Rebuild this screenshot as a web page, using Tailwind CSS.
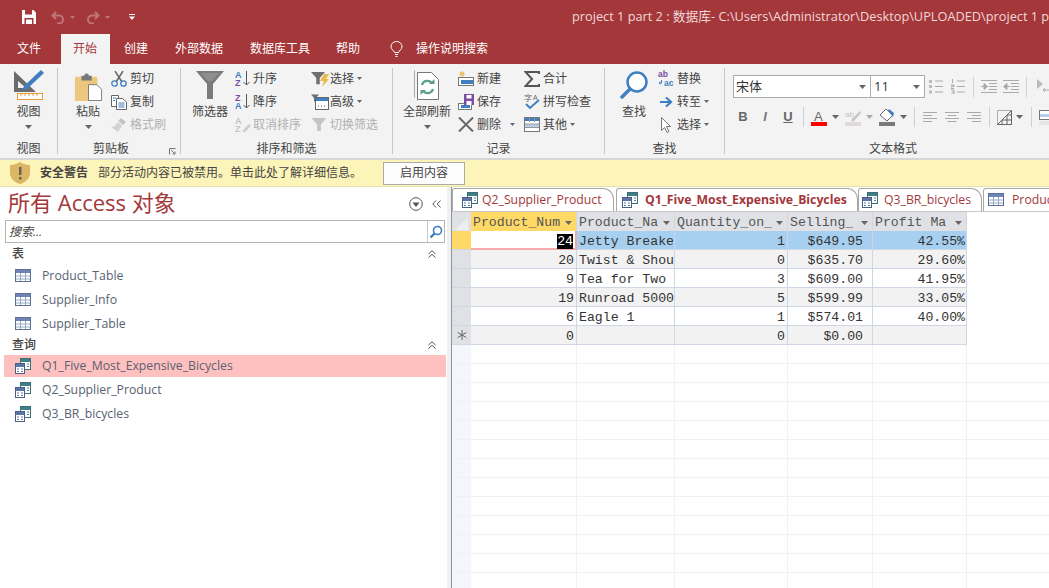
<!DOCTYPE html>
<html lang="zh">
<head>
<meta charset="UTF-8">
<title>project 1 part 2</title>
<script src="https://cdn.jsdelivr.net/npm/@tailwindcss/browser@4"></script>
</head>
<body class="w-[1049px] h-[588px] overflow-hidden bg-white text-[12px] text-[#444] font-['Open_Sans','Noto_Sans_CJK_SC',sans-serif]">

<!-- shared icons -->
<svg class="hidden">
  <defs>
    <symbol id="caret" viewBox="0 0 7 4"><path d="M0 0h7L3.5 4z" fill="#666"/></symbol>
    <symbol id="tbl" viewBox="0 0 16 16">
      <rect x=".5" y="1.5" width="15" height="12" fill="#fff" stroke="#5a6f9a"/>
      <rect x="1" y="2" width="14" height="3" fill="#6d86b5"/>
      <path d="M1 8h14M1 11h14M5.500 5v8M10.500 5v8" stroke="#98a9c8"/>
    </symbol>
    <symbol id="qry" viewBox="0 0 16 16">
      <rect x="5.500" y=".5" width="10" height="11" fill="#fff" stroke="#3d6f78"/>
      <rect x="6" y="1" width="9" height="3" fill="#3f7f86"/>
      <path d="M8 6h2M12 6h2M8 8.500h2M12 8.500h2" stroke="#4d7f88"/>
      <rect x=".5" y="5.500" width="9" height="10" fill="#fff" stroke="#4a5f86"/>
      <rect x="1" y="6" width="8" height="3" fill="#5b76a6"/>
      <path d="M2 11h2M6 11h2M2 13.500h2M6 13.500h2" stroke="#5b76a6"/>
    </symbol>
    <symbol id="funnel" viewBox="0 0 16 16"><path d="M0 1h16L10 8v7H6V8z" fill="currentColor"/></symbol>
    <symbol id="lines-left" viewBox="0 0 14 12"><path d="M0 1.500h14M0 4.500h9M0 7.500h14M0 10.500h9" stroke="#aaa"/></symbol>
    <symbol id="lines-center" viewBox="0 0 14 12"><path d="M0 1.500h14M2.500 4.500h9M0 7.500h14M2.500 10.500h9" stroke="#aaa"/></symbol>
    <symbol id="lines-right" viewBox="0 0 14 12"><path d="M0 1.500h14M5 4.500h9M0 7.500h14M5 10.500h9" stroke="#aaa"/></symbol>
  </defs>
</svg>

<!-- title bar -->
<div class="h-[34px] bg-[#a4373a] flex items-center">
  <svg class="shrink-0 w-[14px] h-[14px] ml-[22px]" viewBox="0 0 14 14"><path d="M0 0h11.500L14 2.500V14H0z" fill="#fff"/><rect x="3" y="0" width="7" height="4.500" fill="#a4373a"/><rect x="2.500" y="8" width="9" height="6" fill="#a4373a"/><rect x="4" y="9.500" width="6" height="4.500" fill="#fff"/></svg>
  <svg class="shrink-0 w-[14px] h-[13px] ml-[15px]" viewBox="0 0 14 13"><path d="M5 1L1.500 4.500 5 8M2 4.500h6a4 4 0 0 1 0 8H6" fill="none" stroke="#c07578" stroke-width="2"/></svg>
  <svg class="shrink-0 w-[5px] h-[3px] ml-[5px]" viewBox="0 0 7 4"><path d="M0 0h7L3.500 4z" fill="#c07578"/></svg>
  <svg class="shrink-0 w-[14px] h-[13px] ml-[11px]" viewBox="0 0 14 13"><path d="M9 1l3.500 3.500L9 8M12 4.500H6a4 4 0 0 0 0 8h2" fill="none" stroke="#c07578" stroke-width="2"/></svg>
  <svg class="shrink-0 w-[5px] h-[3px] ml-[5px]" viewBox="0 0 7 4"><path d="M0 0h7L3.500 4z" fill="#c07578"/></svg>
  <svg class="shrink-0 w-[6px] h-[6px] ml-[19px]" viewBox="0 0 6 6"><path d="M0 0h6v1H0zM0 2.500h6L3 6z" fill="#fff"/></svg>
  <div class="ml-[437px] w-[480px] shrink-0 overflow-hidden text-[12.75px] whitespace-nowrap text-[#f1d9d9]">project 1 part 2 : 数据库- C:\Users\Administrator\Desktop\UPLOADED\project 1 part 2</div>
</div>

<!-- ribbon tabs -->
<div class="h-[30px] bg-[#a4373a] flex text-white">
  <div class="ml-[4px] px-[13px] flex items-center">文件</div>
  <div class="ml-[7px] w-[49px] pl-[12px] flex items-center bg-[#f3f3f3] text-[#a4373a]">开始</div>
  <div class="ml-px px-[13px] flex items-center">创建</div>
  <div class="ml-px px-[13px] flex items-center">外部数据</div>
  <div class="ml-px px-[13px] flex items-center">数据库工具</div>
  <div class="px-[13px] flex items-center">帮助</div>
  <div class="ml-[17px] flex items-center">
    <svg class="w-[13px] h-[16px]" viewBox="0 0 13 16"><path d="M4.500 11.500C4 9.500 1 8.500 1 5.500a5.500 5 0 0 1 11 0c0 3-3 4-3.500 6zM5 13.500h3M5.500 15.500h2" fill="none" stroke="#fff"/></svg>
    <span class="ml-[13px]">操作说明搜索</span>
  </div>
</div>

<!-- ribbon -->
<div class="h-[96px] bg-[#f3f3f3] border-b-2 border-[#d6d6d6] flex overflow-hidden pt-[3px]">

  <!-- 视图 -->
  <div class="w-[57px] shrink-0 flex flex-col">
    <div class="h-[70px] shrink-0 flex flex-col items-center">
      <div class="h-[36px] flex items-end pb-[3px]">
        <svg class="w-[30px] h-[30px]" viewBox="0 0 30 30">
          <path d="M0 1l22 21H0zM4 11v7h8z" fill="#6b6b6b" fill-rule="evenodd"/>
          <path d="M27 0l3 3-17 16-5 2 2-5z" fill="#3f7fc1"/>
          <rect x="3.500" y="23.500" width="25" height="6" fill="#fff" stroke="#e39a3b"/>
          <path d="M7 24v2M11 24v2M15 24v2M19 24v2M23 24v2" stroke="#e39a3b"/>
        </svg>
      </div>
      <div class="leading-[16px] mt-px">视图</div>
      <svg class="w-[7px] h-[4px] mt-[5px]"><use href="#caret"/></svg>
    </div>
    <div class="text-center leading-[24px]">视图</div>
  </div>
  <div class="w-px h-[86px] mt-px shrink-0 bg-[#c6c6c6]"></div>

  <!-- 剪贴板 -->
  <div class="w-[122px] shrink-0 flex flex-col relative">
    <div class="h-[70px] shrink-0 flex">
      <div class="ml-[14px] w-[32px] flex flex-col items-center">
        <div class="h-[36px] flex items-end pb-[2px]">
          <svg class="w-[29px] h-[28px]" viewBox="0 0 29 30">
            <rect x="0" y="4" width="24" height="26" rx="1" fill="#edc77d"/>
            <path d="M7 3h3a2.500 2.500 0 0 1 5 0h3v5H7z" fill="#777"/>
            <path d="M14.500 12.500h9l5 5v12h-14z" fill="#fff" stroke="#777"/>
          </svg>
        </div>
        <div class="leading-[16px] mt-px">粘贴</div>
        <svg class="w-[7px] h-[4px] mt-[5px]"><use href="#caret"/></svg>
      </div>
      <div class="ml-[7px] flex flex-col">
        <div class="h-[23px] flex items-center">
          <svg class="w-[16px] h-[16px]" viewBox="0 0 16 16"><path d="M4 0l7 11M12 0L5 11" stroke="#666" stroke-width="1.500"/><circle cx="3.500" cy="12.500" r="2.700" fill="none" stroke="#3f7fc1" stroke-width="1.300"/><circle cx="12.500" cy="12.500" r="2.700" fill="none" stroke="#3f7fc1" stroke-width="1.300"/></svg>
          <span class="ml-[3px]">剪切</span>
        </div>
        <div class="h-[23px] flex items-center">
          <svg class="w-[16px] h-[16px]" viewBox="0 0 16 16"><path d="M.5 1.500h7v11h-7z" fill="#fff" stroke="#666"/><path d="M5.500 4.500h6l4 3.500v7.500h-10z" fill="#fff" stroke="#666"/><path d="M7.500 9h6M7.500 11h6M7.500 13h6M2 4h3M2 6.500h2" stroke="#3f7fc1"/></svg>
          <span class="ml-[3px]">复制</span>
        </div>
        <div class="h-[23px] flex items-center text-[#b1b1b1]">
          <svg class="w-[16px] h-[16px]" viewBox="0 0 16 16"><path d="M10 1l5 4-3 3-5-4z" fill="#c4c4c4"/><path d="M7 5l4 4-4 6-7-5c3 0 5-2 7-5z" fill="#d2d2d2"/></svg>
          <span class="ml-[3px]">格式刷</span>
        </div>
      </div>
    </div>
    <div class="leading-[24px] pr-[16px] text-center">剪贴板</div>
    <svg class="absolute left-[111px] top-[81px] w-[7px] h-[7px]" viewBox="0 0 7 7"><path d="M.5 6.500v-6h6M2 2l4 4M6 3.500V6H3.500" fill="none" stroke="#777"/></svg>
  </div>
  <div class="w-px h-[86px] mt-px shrink-0 bg-[#c6c6c6]"></div>

  <!-- 排序和筛选 -->
  <div class="w-[211px] shrink-0 flex flex-col">
    <div class="h-[70px] shrink-0 flex">
      <div class="ml-[11px] w-[36px] flex flex-col items-center">
        <div class="h-[36px] flex items-end pb-[4px]">
          <svg class="w-[28px] h-[28px]" viewBox="0 0 28 28"><path d="M0 0h28L17 13v15h-6V13z" fill="#7b7b7b"/><path d="M5 2h18l-7 8H12z" fill="#8f8f8f"/></svg>
        </div>
        <div class="leading-[16px] mt-px">筛选器</div>
      </div>
      <div class="ml-[7px] w-[76px] flex flex-col">
        <div class="h-[23px] flex items-center">
          <svg class="w-[16px] h-[17px]" viewBox="0 0 16 17"><text x="0" y="7.500" font-size="9" font-weight="700" fill="#3f7fc1" font-family="Liberation Sans">A</text><text x="0" y="16" font-size="9" font-weight="700" fill="#7a4ea3" font-family="Liberation Sans">Z</text><path d="M11.500 1v14M8.500 12l3 3 3-3" fill="none" stroke="#555"/></svg>
          <span class="ml-[2px]">升序</span>
        </div>
        <div class="h-[23px] flex items-center">
          <svg class="w-[16px] h-[17px]" viewBox="0 0 16 17"><text x="0" y="7.500" font-size="9" font-weight="700" fill="#7a4ea3" font-family="Liberation Sans">Z</text><text x="0" y="16" font-size="9" font-weight="700" fill="#3f7fc1" font-family="Liberation Sans">A</text><path d="M11.500 1v14M8.500 12l3 3 3-3" fill="none" stroke="#555"/></svg>
          <span class="ml-[2px]">降序</span>
        </div>
        <div class="h-[23px] flex items-center text-[#b1b1b1] whitespace-nowrap">
          <svg class="w-[16px] h-[17px]" viewBox="0 0 16 17"><text x="0" y="7.500" font-size="9" font-weight="700" fill="#c4c4c4" font-family="Liberation Sans">A</text><text x="0" y="16" font-size="9" font-weight="700" fill="#c4c4c4" font-family="Liberation Sans">Z</text><path d="M8 14l6-6 2 2-6 6H8z" fill="#cfcfcf"/></svg>
          <span class="ml-[2px]">取消排序</span>
        </div>
      </div>
      <div class="flex flex-col">
        <div class="h-[23px] flex items-center">
          <span class="relative w-[18px] h-[16px]">
            <svg class="w-[14px] h-[14px] text-[#6f6f6f]"><use href="#funnel"/></svg>
            <svg class="absolute left-[9px] top-[3px] w-[9px] h-[13px]" viewBox="0 0 9 13"><path d="M4 0h5L6 5h3L2 13l2-6H0z" fill="#e9b949"/></svg>
          </span>
          <span class="ml-px">选择</span>
          <svg class="w-[5px] h-[3px] ml-[3px]"><use href="#caret"/></svg>
        </div>
        <div class="h-[23px] flex items-center">
          <span class="relative w-[18px] h-[16px]">
            <svg class="absolute left-0 top-0 w-[8px] h-[8px] text-[#6f6f6f]"><use href="#funnel"/></svg>
            <svg class="absolute left-[4px] top-[3px] w-[14px] h-[13px]" viewBox="0 0 14 13"><rect x=".5" y=".5" width="13" height="12" fill="#fff" stroke="#666"/><rect x="1" y="1" width="12" height="3" fill="#3f7fc1"/><path d="M3 9h1M6 9h1M9 9h1" stroke="#555"/></svg>
          </span>
          <span class="ml-px">高级</span>
          <svg class="w-[5px] h-[3px] ml-[3px]"><use href="#caret"/></svg>
        </div>
        <div class="h-[23px] flex items-center text-[#b1b1b1] whitespace-nowrap">
          <svg class="w-[16px] h-[15px] text-[#c4c4c4] mr-[3px]"><use href="#funnel"/></svg>
          <span>切换筛选</span>
        </div>
      </div>
    </div>
    <div class="leading-[24px] text-center">排序和筛选</div>
  </div>
  <div class="w-px h-[86px] mt-px shrink-0 bg-[#c6c6c6]"></div>

  <!-- 记录 -->
  <div class="w-[211px] shrink-0 flex flex-col">
    <div class="h-[70px] shrink-0 flex">
      <div class="ml-[10px] w-[48px] flex flex-col items-center">
        <div class="h-[36px] flex items-end pb-[2px]">
          <svg class="w-[26px] h-[31px]" viewBox="0 0 26 31">
            <path d="M3.500 3.500v27M.5 .5v27" stroke="#aaa" fill="none"/>
            <path d="M3.500 2.500h14l7 7v20h-21z" fill="#fff" stroke="#777"/>
            <path d="M8 15a5.500 5.500 0 0 1 10-1.500M19 19a5.500 5.500 0 0 1-10 1.500" fill="none" stroke="#5aa08a" stroke-width="2.200"/>
            <path d="M15 14h5.500v-5zM12 20H6.500v5z" fill="#5aa08a"/>
          </svg>
        </div>
        <div class="leading-[16px] mt-px whitespace-nowrap">全部刷新</div>
        <svg class="w-[7px] h-[4px] mt-[5px]"><use href="#caret"/></svg>
      </div>
      <div class="ml-[7px] w-[66px] flex flex-col">
        <div class="h-[23px] flex items-center">
          <svg class="w-[16px] h-[16px]" viewBox="0 0 16 16"><path d="M4 0v6M1 3h6M2 1l4 4M6 1L2 5" stroke="#e9b949"/><rect x=".5" y="6.500" width="15" height="8" fill="#fff" stroke="#777"/><rect x="3" y="9" width="12" height="4" fill="#3f7fc1"/></svg>
          <span class="ml-[3px]">新建</span>
        </div>
        <div class="h-[23px] flex items-center">
          <svg class="w-[16px] h-[16px]" viewBox="0 0 16 16"><rect x=".5" y="9.500" width="13" height="6" fill="#fff" stroke="#777"/><rect x="3" y="11" width="9" height="3" fill="#3f7fc1"/><rect x="6" y="0" width="10" height="11" fill="#7a4ea3"/><rect x="8.500" y="1" width="5" height="3.500" fill="#fff"/><rect x="8.500" y="7" width="5" height="4" fill="#fff"/></svg>
          <span class="ml-[3px]">保存</span>
        </div>
        <div class="h-[23px] flex items-center">
          <svg class="w-[16px] h-[15px]" viewBox="0 0 16 15"><path d="M1 .5l14 14M15 .5L1 14.500" stroke="#666" stroke-width="2"/></svg>
          <span class="ml-[3px]">删除</span>
          <svg class="w-[5px] h-[3px] ml-[9px]"><use href="#caret"/></svg>
        </div>
      </div>
      <div class="flex flex-col">
        <div class="h-[23px] flex items-center">
          <svg class="w-[16px] h-[16px]" viewBox="0 0 16 16"><path d="M15 3V1H1.500L8 8l-6.500 7H15v-2" fill="none" stroke="#555" stroke-width="2"/></svg>
          <span class="ml-[3px]">合计</span>
        </div>
        <div class="h-[23px] flex items-center">
          <svg class="w-[16px] h-[17px]" viewBox="0 0 16 17"><text x="0" y="8" font-size="8" fill="#666" font-family="Noto Sans CJK SC">字</text><text x="9" y="7" font-size="7" fill="#666" font-family="Liberation Sans">A</text><path d="M2 11l4 4 9-8" fill="none" stroke="#3f7fc1" stroke-width="2"/></svg>
          <span class="ml-[3px]">拼写检查</span>
        </div>
        <div class="h-[23px] flex items-center">
          <svg class="w-[16px] h-[15px]" viewBox="0 0 16 15"><rect x=".5" y=".5" width="15" height="14" fill="#fff" stroke="#777"/><rect x="1" y="1" width="14" height="3" fill="#3f7fc1"/><rect x="1" y="7" width="14" height="3" fill="#b5cfe6"/><path d="M1 7h14M1 10.500h14M5.500 1v4M10.500 1v4" stroke="#999"/></svg>
          <span class="ml-[3px]">其他</span>
          <svg class="w-[5px] h-[3px] ml-[3px]"><use href="#caret"/></svg>
        </div>
      </div>
    </div>
    <div class="leading-[24px] text-center">记录</div>
  </div>
  <div class="w-px h-[86px] mt-px shrink-0 bg-[#c6c6c6]"></div>

  <!-- 查找 -->
  <div class="w-[119px] shrink-0 flex flex-col">
    <div class="h-[70px] shrink-0 flex">
      <div class="ml-[14px] w-[30px] flex flex-col items-center">
        <div class="h-[36px] flex items-end pb-[4px]">
          <svg class="w-[28px] h-[28px]" viewBox="0 0 28 28"><circle cx="17" cy="11" r="9.500" fill="#fff" stroke="#3f7fc1" stroke-width="2.500"/><path d="M10 18L2 26" stroke="#3f7fc1" stroke-width="3.500" stroke-linecap="round"/></svg>
        </div>
        <div class="leading-[16px] mt-px">查找</div>
      </div>
      <div class="ml-[9px] flex flex-col">
        <div class="h-[23px] flex items-center">
          <svg class="w-[17px] h-[17px]" viewBox="0 0 17 17"><text x="0" y="7" font-size="8.500" font-weight="700" fill="#7a4ea3" font-family="Liberation Sans">ab</text><text x="6" y="16" font-size="8.500" font-weight="700" fill="#3f7fc1" font-family="Liberation Sans">ac</text><path d="M3.500 10v3H1M2.500 12l-1.500 1 1.500 1" fill="none" stroke="#3f7fc1"/></svg>
          <span class="ml-[2px]">替换</span>
        </div>
        <div class="h-[23px] flex items-center">
          <svg class="w-[17px] h-[12px]" viewBox="0 0 17 12"><path d="M2 6h11M8 1.500L13 6l-5 4.500" fill="none" stroke="#3f7fc1" stroke-width="2.200"/></svg>
          <span class="ml-[2px]">转至</span>
          <svg class="w-[5px] h-[3px] ml-[3px]"><use href="#caret"/></svg>
        </div>
        <div class="h-[23px] flex items-center">
          <svg class="w-[17px] h-[16px]" viewBox="0 0 17 16"><path d="M3.500 .5v13l3-3 2.500 5 2-1-2.500-5h4z" fill="#fff" stroke="#777"/></svg>
          <span class="ml-[2px]">选择</span>
          <svg class="w-[5px] h-[3px] ml-[3px]"><use href="#caret"/></svg>
        </div>
      </div>
    </div>
    <div class="leading-[24px] text-center">查找</div>
  </div>
  <div class="w-px h-[86px] mt-px shrink-0 bg-[#c6c6c6]"></div>

  <!-- 文本格式 -->
  <div class="w-[336px] shrink-0 flex flex-col">
    <div class="h-[70px] shrink-0 pt-[8px]">
      <div class="h-[23px] flex items-center">
        <div class="ml-[8px] w-[138px] h-[23px] bg-white border border-[#ababab] flex items-center justify-between pl-[2px] pr-[2px]">
          <span class="text-[13px] text-[#333]">宋体</span>
          <svg class="w-[7px] h-[4px] mr-[2px]"><use href="#caret"/></svg>
        </div>
        <div class="w-[54px] h-[23px] bg-white border border-l-0 border-[#ababab] flex items-center justify-between pl-[3px] pr-[2px]">
          <span class="text-[13px] text-[#333]">11</span>
          <svg class="w-[7px] h-[4px] mr-[2px]"><use href="#caret"/></svg>
        </div>
        <svg class="ml-[4px] w-[14px] h-[15px]" viewBox="0 0 14 15"><path d="M6 2h8M6 7.500h8M6 13h8" stroke="#aaa"/><path d="M0 1h3v3H0zM0 6h3v3H0zM0 11.500h3v3H0z" fill="#bbb"/></svg>
        <svg class="ml-[8px] w-[14px] h-[15px]" viewBox="0 0 14 15"><path d="M6 2h8M6 7.500h8M6 13h8M1.500 0v4M0 6h3v1.500H0v2h3M0 11h3v4H0M1 13h2" stroke="#aaa" fill="none"/></svg>
        <div class="ml-[8px] w-px h-[20px] bg-[#d0d0d0]"></div>
        <svg class="ml-[7px] w-[16px] h-[14px]" viewBox="0 0 16 14"><path d="M0 .5h16M8 3.500h8M8 6.500h8M8 9.500h8M0 12.500h16" stroke="#aaa"/><path d="M0 6.500h4M3 3.500l3.500 3-3.500 3z" stroke="#aaa" fill="#aaa"/></svg>
        <svg class="ml-[6px] w-[16px] h-[14px]" viewBox="0 0 16 14"><path d="M0 .5h16M8 3.500h8M8 6.500h8M8 9.500h8M0 12.500h16" stroke="#aaa"/><path d="M7 6.500H3M4 3.500l-3.500 3 3.500 3z" stroke="#aaa" fill="#aaa"/></svg>
        <div class="ml-[7px] w-px h-[20px] bg-[#d0d0d0]"></div>
        <svg class="ml-[10px] w-[14px] h-[15px]" viewBox="0 0 14 15"><path d="M0 0l6 5-6 5z" fill="#bbb"/><path d="M13 7v4H6M8 9l-2 2 2 2" fill="none" stroke="#aaa"/></svg>
      </div>
      <div class="h-[22px] mt-[8px] flex items-center">
        <div class="ml-[10px] w-[16px] text-center font-['Liberation_Sans',sans-serif] text-[13px] font-bold text-[#666]">B</div>
        <div class="ml-[6px] w-[16px] text-center font-['Liberation_Sans',sans-serif] text-[13px] italic font-bold text-[#777]">I</div>
        <div class="ml-[7px] w-[16px] text-center font-['Liberation_Sans',sans-serif] text-[13px] font-bold text-[#666] underline">U</div>
        <div class="ml-[7px] w-px h-[20px] bg-[#d0d0d0]"></div>
        <svg class="ml-[7px] w-[16px] h-[17px]" viewBox="0 0 16 17"><text x="3" y="12" font-size="13" fill="#666" font-family="Liberation Sans">A</text><rect y="13" width="16" height="4" fill="#f00"/></svg>
        <svg class="ml-[5px] w-[7px] h-[4px]"><use href="#caret"/></svg>
        <svg class="ml-[6px] w-[16px] h-[17px]" viewBox="0 0 16 17"><text x="0" y="8" font-size="8" fill="#c4c4c4" font-family="Liberation Sans">ab</text><path d="M6 11l9-9 1 2-8 9z" fill="#c4c4c4"/><rect y="13" width="16" height="4" fill="#ddd9dd"/></svg>
        <svg class="ml-[5px] w-[7px] h-[4px] opacity-50"><use href="#caret"/></svg>
        <svg class="ml-[6px] w-[16px] h-[17px]" viewBox="0 0 16 17"><path d="M1 6l6-6 7 6-6 6z" fill="#fff" stroke="#666"/><path d="M10 0l5 4-1 4-5-6z" fill="#3f7fc1"/><rect y="13" width="16" height="4" fill="#7a7a7a"/></svg>
        <svg class="ml-[5px] w-[7px] h-[4px]"><use href="#caret"/></svg>
        <div class="ml-[7px] w-px h-[20px] bg-[#d0d0d0]"></div>
        <svg class="ml-[8px] w-[14px] h-[12px]"><use href="#lines-left"/></svg>
        <svg class="ml-[8px] w-[14px] h-[12px]"><use href="#lines-center"/></svg>
        <svg class="ml-[8px] w-[14px] h-[12px]"><use href="#lines-right"/></svg>
        <div class="ml-[8px] w-px h-[20px] bg-[#d0d0d0]"></div>
        <svg class="ml-[7px] w-[15px] h-[15px]" viewBox="0 0 15 15"><path d="M.5 .5h14v14H.5z" fill="none" stroke="#666" stroke-dasharray="1 1"/><path d="M.5 14.500h14v-14M5 14.500V10M10 14.500V5M5 10h9.500M10 5h4.500M.5 14.500l14-14" fill="none" stroke="#666"/></svg>
        <svg class="ml-[4px] w-[7px] h-[4px]"><use href="#caret"/></svg>
        <div class="ml-[8px] w-px h-[20px] bg-[#d0d0d0]"></div>
        <svg class="ml-[7px] w-[15px] h-[15px]" viewBox="0 0 15 15"><rect x=".5" y=".5" width="14" height="9" fill="#fff" stroke="#777"/><rect x="1" y="4" width="13" height="3" fill="#b5cfe6"/><rect y="11" width="15" height="4" fill="#e6e6e6"/></svg>
      </div>
    </div>
    <div class="leading-[24px] text-center">文本格式</div>
  </div>
</div>

<!-- message bar -->
<div class="h-[27px] bg-[#fcf4b8] border-b border-[#e8e4a8] flex items-center">
  <svg class="ml-[10px] w-[20px] h-[22px]" viewBox="0 0 20 22"><path d="M10 0c3 2 6 3 10 3v8c0 5-4 9-10 11C4 20 0 16 0 11V3c4 0 7-1 10-3z" fill="#dcb565"/><rect x="9" y="5" width="2.500" height="8" fill="#665"/><rect x="9" y="15" width="2.500" height="2.500" fill="#665"/></svg>
  <span class="ml-[10px] font-bold text-[#444]">安全警告</span>
  <span class="ml-[10px] text-[#444]">部分活动内容已被禁用。单击此处了解详细信息。</span>
  <div class="ml-[21px] w-[82px] h-[23px] bg-[#fdfdfd] border border-[#ababab] flex items-center justify-center">启用内容</div>
</div>

<!-- content -->
<div class="h-[401px] flex">

  <!-- navigation pane -->
  <div class="w-[447px] shrink-0">
    <div class="h-[33px] pb-[4px] flex items-center text-[#a4373a]">
      <span class="ml-[8px] text-[22px] leading-none">所有 Access 对象</span>
      <svg class="ml-auto w-[14px] h-[14px] mt-[4px]" viewBox="0 0 14 14"><circle cx="7" cy="7" r="6.300" fill="none" stroke="#555"/><path d="M3.500 5.500h7L7 10z" fill="#555"/></svg>
      <svg class="ml-[9px] mr-[6px] w-[9px] h-[8px] mt-[4px]" viewBox="0 0 9 8"><path d="M4 .5L.8 4 4 7.500M8.500 .5L5.300 4l3.200 3.500" fill="none" stroke="#555"/></svg>
    </div>
    <div class="ml-[5px] w-[440px] h-[23px] border border-[#b5b5b5] flex items-center">
      <span class="ml-[3px] italic text-[#444]">搜索...</span>
      <div class="ml-auto w-[17px] h-full border-l border-[#c8c8c8] flex items-center justify-center">
        <svg class="w-[14px] h-[14px]" viewBox="0 0 14 14"><circle cx="8.500" cy="5.500" r="4" fill="#fff" stroke="#3f7fc1" stroke-width="1.600"/><path d="M5.500 8.500L1.500 12.500" stroke="#3f7fc1" stroke-width="2.400"/></svg>
      </div>
    </div>
    <div class="h-[22px] flex items-center justify-between pl-[12px] pr-[11px] font-medium text-[#444]">
      <span>表</span>
      <svg class="w-[8px] h-[8px]" viewBox="0 0 8 8"><path d="M.5 4L4 .8 7.500 4M.5 7.500L4 4.300 7.500 7.500" fill="none" stroke="#555"/></svg>
    </div>
    <div class="flex flex-col gap-[2px] text-[#586272] text-[12.25px]">
      <div class="h-[22px] flex items-center pl-[15px]"><svg class="w-[16px] h-[16px] mr-[11px]"><use href="#tbl"/></svg>Product_Table</div>
      <div class="h-[22px] flex items-center pl-[15px]"><svg class="w-[16px] h-[16px] mr-[11px]"><use href="#tbl"/></svg>Supplier_Info</div>
      <div class="h-[22px] flex items-center pl-[15px]"><svg class="w-[16px] h-[16px] mr-[11px]"><use href="#tbl"/></svg>Supplier_Table</div>
    </div>
    <div class="h-[20px] flex items-center justify-between pl-[12px] pr-[11px] font-medium text-[#444]">
      <span>查询</span>
      <svg class="w-[8px] h-[8px]" viewBox="0 0 8 8"><path d="M.5 4L4 .8 7.500 4M.5 7.500L4 4.300 7.500 7.500" fill="none" stroke="#555"/></svg>
    </div>
    <div class="flex flex-col gap-[2px] text-[#586272] text-[12.25px]">
      <div class="ml-[4px] mr-[1px] h-[22px] flex items-center pl-[11px] bg-[#ffc0c0]"><svg class="w-[16px] h-[16px] mr-[11px]"><use href="#qry"/></svg>Q1_Five_Most_Expensive_Bicycles</div>
      <div class="h-[22px] flex items-center pl-[15px]"><svg class="w-[16px] h-[16px] mr-[11px]"><use href="#qry"/></svg>Q2_Supplier_Product</div>
      <div class="h-[22px] flex items-center pl-[15px]"><svg class="w-[16px] h-[16px] mr-[11px]"><use href="#qry"/></svg>Q3_BR_bicycles</div>
    </div>
  </div>

  <!-- splitter -->
  <div class="w-[4px] shrink-0 bg-[#f0f0f0]"></div>

  <!-- document area -->
  <div class="flex-1 min-w-0 border-l border-[#8f959e] overflow-hidden">

    <!-- document tabs -->
    <div class="h-[25px] pt-px flex text-[#a4373a] text-[12.25px] whitespace-nowrap border-b border-[#c8c8c8]">
      <div class="w-[162px] shrink-0 flex items-center border border-b-0 border-[#a8a8a8] rounded-tl-[3px] rounded-tr-[11px] bg-white">
        <svg class="ml-[9px] w-[16px] h-[16px] mr-[4px]"><use href="#qry"/></svg>Q2_Supplier_Product
      </div>
      <div class="ml-[2px] w-[242px] shrink-0 flex items-center border border-b-0 border-[#a8a8a8] rounded-tl-[3px] rounded-tr-[11px] bg-white font-bold">
        <svg class="ml-[5px] w-[16px] h-[16px] mr-[7px]"><use href="#qry"/></svg>Q1_Five_Most_Expensive_Bicycles
      </div>
      <div class="w-[124px] shrink-0 flex items-center border border-b-0 border-[#a8a8a8] rounded-tl-[3px] rounded-tr-[11px] bg-white">
        <svg class="ml-[3px] w-[16px] h-[16px] mr-[6px]"><use href="#qry"/></svg>Q3_BR_bicycles
      </div>
      <div class="ml-px w-[140px] shrink-0 flex items-center border border-b-0 border-[#a8a8a8] rounded-tl-[3px] rounded-tr-[11px] bg-white">
        <svg class="ml-[4px] w-[16px] h-[16px] mr-[8px]"><use href="#tbl"/></svg>Product_Table
      </div>
    </div>

    <!-- datasheet -->
    <div id="sheet" class="font-['Liberation_Mono','Noto_Sans_CJK_SC',monospace] text-[13.2px] text-[#333] whitespace-nowrap [&>div+div>div]:pt-[4px]">

      <div class="h-[19px] flex text-[#555] [&>div+div]:pt-[2px]">
        <div class="w-[19px] bg-[#dfe1e5] flex items-end overflow-hidden"><svg class="w-[17px] h-[17px]" viewBox="0 0 17 17"><path d="M16 3L3 16h13z" fill="#eceef1"/></svg></div>
        <div class="w-[106px] px-[2px] flex items-center justify-between bg-[#ffd966] border-r border-[#cfd6e4]"><span class="overflow-hidden">Product_Num</span><svg class="w-[7px] h-[4px] shrink-0 ml-[1px] mr-[2px]"><use href="#caret"/></svg></div>
        <div class="w-[98px] px-[2px] flex items-center justify-between bg-[#dfe1e5] border-r border-[#cfd6e4]"><span class="overflow-hidden">Product_Na</span><svg class="w-[7px] h-[4px] shrink-0 ml-[1px] mr-[2px]"><use href="#caret"/></svg></div>
        <div class="w-[113px] px-[2px] flex items-center justify-between bg-[#dfe1e5] border-r border-[#cfd6e4]"><span class="overflow-hidden">Quantity_on_</span><svg class="w-[7px] h-[4px] shrink-0 ml-[1px] mr-[2px]"><use href="#caret"/></svg></div>
        <div class="w-[85px] px-[2px] flex items-center justify-between bg-[#dfe1e5] border-r border-[#cfd6e4]"><span class="overflow-hidden">Selling_</span><svg class="w-[7px] h-[4px] shrink-0 ml-[1px] mr-[2px]"><use href="#caret"/></svg></div>
        <div class="w-[94px] px-[2px] flex items-center justify-between bg-[#dfe1e5] border-r border-[#cfd6e4]"><span class="overflow-hidden">Profit Ma</span><svg class="w-[7px] h-[4px] shrink-0 ml-[1px] mr-[2px]"><use href="#caret"/></svg></div>
      </div>

      <div class="h-[19px] flex">
        <div class="w-[19px] bg-[#ffd966] border-b border-[#cfd6e4]"></div>
        <div class="w-[106px] pr-[2px] flex items-center justify-end bg-white border-b-2 border-r-2 border-[#f5a9a9]"><span class="bg-black text-white leading-[15px]">24</span></div>
        <div class="w-[98px] px-[2px] flex items-center overflow-hidden bg-[#a6cff0] border-b border-r border-[#cfd6e4]">Jetty Breaker</div>
        <div class="w-[113px] px-[2px] flex items-center justify-end bg-[#a6cff0] border-b border-r border-[#cfd6e4]">1</div>
        <div class="w-[85px] pr-[9px] flex items-center justify-end bg-[#a6cff0] border-b border-r border-[#cfd6e4]">$649.95</div>
        <div class="w-[94px] pr-[1px] flex items-center justify-end bg-[#a6cff0] border-b border-r border-[#cfd6e4]">42.55%</div>
      </div>
      <div class="h-[19px] flex">
        <div class="w-[19px] bg-[#dfe1e5] border-b border-[#cfd6e4]"></div>
        <div class="w-[106px] pr-[2px] flex items-center justify-end bg-[#f2f2f2] border-b border-r border-[#cfd6e4]">20</div>
        <div class="w-[98px] px-[2px] flex items-center overflow-hidden bg-[#f2f2f2] border-b border-r border-[#cfd6e4]">Twist &amp; Shout</div>
        <div class="w-[113px] px-[2px] flex items-center justify-end bg-[#f2f2f2] border-b border-r border-[#cfd6e4]">0</div>
        <div class="w-[85px] pr-[9px] flex items-center justify-end bg-[#f2f2f2] border-b border-r border-[#cfd6e4]">$635.70</div>
        <div class="w-[94px] pr-[1px] flex items-center justify-end bg-[#f2f2f2] border-b border-r border-[#cfd6e4]">29.60%</div>
      </div>
      <div class="h-[19px] flex">
        <div class="w-[19px] bg-[#dfe1e5] border-b border-[#cfd6e4]"></div>
        <div class="w-[106px] pr-[2px] flex items-center justify-end bg-white border-b border-r border-[#cfd6e4]">9</div>
        <div class="w-[98px] px-[2px] flex items-center overflow-hidden bg-white border-b border-r border-[#cfd6e4]">Tea for Two</div>
        <div class="w-[113px] px-[2px] flex items-center justify-end bg-white border-b border-r border-[#cfd6e4]">3</div>
        <div class="w-[85px] pr-[9px] flex items-center justify-end bg-white border-b border-r border-[#cfd6e4]">$609.00</div>
        <div class="w-[94px] pr-[1px] flex items-center justify-end bg-white border-b border-r border-[#cfd6e4]">41.95%</div>
      </div>
      <div class="h-[19px] flex">
        <div class="w-[19px] bg-[#dfe1e5] border-b border-[#cfd6e4]"></div>
        <div class="w-[106px] pr-[2px] flex items-center justify-end bg-[#f2f2f2] border-b border-r border-[#cfd6e4]">19</div>
        <div class="w-[98px] px-[2px] flex items-center overflow-hidden bg-[#f2f2f2] border-b border-r border-[#cfd6e4]">Runroad 5000</div>
        <div class="w-[113px] px-[2px] flex items-center justify-end bg-[#f2f2f2] border-b border-r border-[#cfd6e4]">5</div>
        <div class="w-[85px] pr-[9px] flex items-center justify-end bg-[#f2f2f2] border-b border-r border-[#cfd6e4]">$599.99</div>
        <div class="w-[94px] pr-[1px] flex items-center justify-end bg-[#f2f2f2] border-b border-r border-[#cfd6e4]">33.05%</div>
      </div>
      <div class="h-[19px] flex">
        <div class="w-[19px] bg-[#dfe1e5] border-b border-[#cfd6e4]"></div>
        <div class="w-[106px] pr-[2px] flex items-center justify-end bg-white border-b border-r border-[#cfd6e4]">6</div>
        <div class="w-[98px] px-[2px] flex items-center overflow-hidden bg-white border-b border-r border-[#cfd6e4]">Eagle 1</div>
        <div class="w-[113px] px-[2px] flex items-center justify-end bg-white border-b border-r border-[#cfd6e4]">1</div>
        <div class="w-[85px] pr-[9px] flex items-center justify-end bg-white border-b border-r border-[#cfd6e4]">$574.01</div>
        <div class="w-[94px] pr-[1px] flex items-center justify-end bg-white border-b border-r border-[#cfd6e4]">40.00%</div>
      </div>
      <div class="h-[19px] flex">
        <div class="w-[19px] flex items-center justify-center bg-[#dfe1e5] border-b border-[#cfd6e4]"><svg class="w-[10px] h-[10px] mt-[-4px]" viewBox="0 0 10 10"><path d="M5 0v10M.7 2.500l8.600 5M.7 7.500l8.600-5" stroke="#666" fill="none"/></svg></div>
        <div class="w-[106px] pr-[2px] flex items-center justify-end bg-[#f2f2f2] border-b border-r border-[#cfd6e4]">0</div>
        <div class="w-[98px] bg-[#f2f2f2] border-b border-r border-[#cfd6e4]"></div>
        <div class="w-[113px] px-[2px] flex items-center justify-end bg-[#f2f2f2] border-b border-r border-[#cfd6e4]">0</div>
        <div class="w-[85px] pr-[9px] flex items-center justify-end bg-[#f2f2f2] border-b border-r border-[#cfd6e4]">$0.00</div>
        <div class="w-[94px] bg-[#f2f2f2] border-b border-r border-[#cfd6e4]"></div>
      </div>
    </div>
  </div>
</div>

<script>
// empty rows under the datasheet
const sheet = document.getElementById('sheet');
const widths = ['w-[106px]', 'w-[98px]', 'w-[113px]', 'w-[85px]', 'w-[94px]'];
for (let i = 0; i < 13; i++) {
    const row = document.createElement('div');
    row.className = 'h-[19px] flex border-b border-[#f0f1f4]';
    row.innerHTML = '<div class="w-[19px] bg-[#f5f6fc]"></div>' +
        widths.map(w => `<div class="${w} border-r border-[#f0f1f4]"></div>`).join('');
    sheet.appendChild(row);
}
</script>
</body>
</html>
